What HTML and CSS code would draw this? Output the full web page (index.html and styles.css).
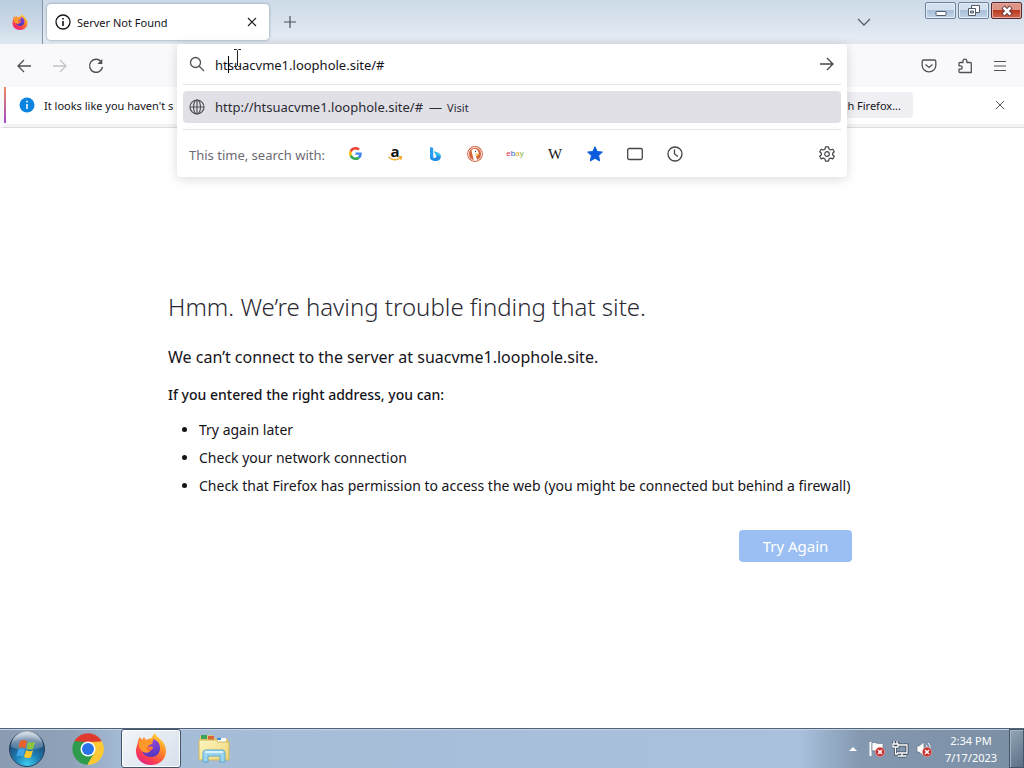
FILE: index.html
```html
<!DOCTYPE html>
<html lang="en">
<head>
<meta charset="utf-8">
<title>Server Not Found</title>
<link rel="stylesheet" href="styles.css">
</head>
<body>
<svg class="defs" aria-hidden="true">
  <defs>
    <linearGradient id="fxBody" x1="0.8" y1="0" x2="0.2" y2="1"><stop offset="0" stop-color="#ffe040"/><stop offset="0.4" stop-color="#ff8a28"/><stop offset="0.75" stop-color="#fb3c50"/><stop offset="1" stop-color="#e0208c"/></linearGradient>
    <linearGradient id="fxCore" x1="0" y1="0" x2="0.3" y2="1"><stop offset="0" stop-color="#a04be0"/><stop offset="1" stop-color="#5638c0"/></linearGradient>
    <radialGradient id="orb" cx="0.5" cy="0.95" r="0.9"><stop offset="0" stop-color="#3fd0f0"/><stop offset="0.4" stop-color="#1d7fb4"/><stop offset="0.8" stop-color="#1e4a78"/><stop offset="1" stop-color="#7d9bb8"/></radialGradient>
    <linearGradient id="shine" x1="0" y1="0" x2="0" y2="1"><stop offset="0" stop-color="#fff" stop-opacity="0.7"/><stop offset="1" stop-color="#fff" stop-opacity="0.15"/></linearGradient>
    <linearGradient id="folder" x1="0" y1="0" x2="1" y2="1"><stop offset="0" stop-color="#fdf6c0"/><stop offset="1" stop-color="#efd572"/></linearGradient>
    <symbol id="firefox" viewBox="0 0 32 32">
      <path d="M3 9c0-2 1-4 2-5l2 3 2-3 2 3c2-1 4-2 6-2 0-2 2-4 3-5 1 4 5 5 8 9 2 3 3 6 3 9 0 8-6 14-15 14S1 26 1 18c0-3 1-6 2-9z" fill="url(#fxBody)"/>
      <path d="M18 6c4 1 7 4 7 9 0 6-4 9-9 9-5 0-8-3-9-6 3 2 6 2 8 0 2-1 3-2 3-4-2-1-4 0-6-1 1-2 2-3 5-3 1-1 1-2 1-4z" fill="url(#fxCore)"/>
      <path d="M4 8c3-1 6-1 9 1l5 1c-2 2-5 2-6 4-1 3 1 4 3 4-2 2-5 2-8 0-3-3-4-6-3-10z" fill="#ff9a2a"/>
    </symbol>
    <symbol id="redx" viewBox="0 0 10 10">
      <circle cx="5" cy="5" r="4.7" fill="#c9302f" stroke="#f0b0a8" stroke-width="0.6"/>
      <path d="M3 3l4 4M7 3L3 7" stroke="#fff" stroke-width="1.5"/>
    </symbol>
  </defs>
</svg>

<header class="titlebar">
  <div class="view"><svg width="16" height="16"><use href="#firefox"/></svg></div>
  <div class="tab">
    <svg width="16" height="16" viewBox="0 0 16 16" fill="none" stroke="#15141a" stroke-width="1.3"><circle cx="8" cy="8" r="7"/><path d="M8 7v5M8 4v1.5" stroke-width="1.6"/></svg>
    <span class="tab-title">Server Not Found</span>
    <button class="icon-btn" aria-label="Close tab"><svg width="10" height="10" viewBox="0 0 10 10" stroke="#222" stroke-width="1.2"><path d="M1 1l8 8M9 1L1 9"/></svg></button>
  </div>
  <button class="icon-btn new-tab" aria-label="New tab"><svg width="12" height="12" viewBox="0 0 12 12" stroke="#4b5057" stroke-width="1.2"><path d="M6 0v12M0 6h12"/></svg></button>
  <button class="icon-btn list-tabs" aria-label="List all tabs"><svg width="14" height="8" viewBox="0 0 14 8" fill="none" stroke="#555c66" stroke-width="1.3"><path d="M1 1l6 6 6-6"/></svg></button>
  <div class="window-controls">
    <button class="win-btn" aria-label="Minimize"><svg width="12" height="12" viewBox="0 0 12 12"><rect x="1" y="6.500" width="10" height="4" rx="0.5" fill="#fff" stroke="#505a68"/></svg></button>
    <button class="win-btn" aria-label="Restore"><svg width="13" height="13" viewBox="0 0 13 13" fill="#fff" stroke="#505a68"><path d="M4.500 1.500h8v7h-8z"/><path d="M1.500 4.500h7v7h-7z"/><path d="M3.500 7h3v2h-3z" fill="#b9cde2"/></svg></button>
    <button class="win-btn close" aria-label="Close"><svg width="12" height="12" viewBox="0 0 12 12"><path d="M2 2l8 8M10 2l-8 8" stroke="#5b3038" stroke-width="4.500"/><path d="M2.500 2.500l7 7M9.500 2.500l-7 7" stroke="#fff" stroke-width="2.500"/></svg></button>
  </div>
</header>

<nav class="toolbar">
  <div class="nav-buttons">
    <button class="icon-btn" aria-label="Back"><svg width="16" height="16" viewBox="0 0 16 16" fill="none" stroke="#505056" stroke-width="1.3"><path d="M15 8H2M8 2L2 8l6 6"/></svg></button>
    <button class="icon-btn" aria-label="Forward" disabled><svg width="16" height="16" viewBox="0 0 16 16" fill="none" stroke="#c4c4c8" stroke-width="1.3"><path d="M1 8h13M8 2l6 6-6 6"/></svg></button>
    <button class="icon-btn" aria-label="Reload"><svg width="16" height="16" viewBox="0 0 16 16" fill="none" stroke="#505056" stroke-width="1.4"><path d="M13 3.500A6.500 6.500 0 1 0 14.500 9"/><path d="M14.300 1v5h-5z" fill="#505056" stroke="none"/></svg></button>
  </div>
  <div class="urlbar">
    <div class="urlbar-panel">
      <div class="url-row">
        <svg width="16" height="16" viewBox="0 0 16 16" fill="none" stroke="#505056" stroke-width="1.3"><circle cx="6.500" cy="6.500" r="5"/><path d="M10 10l5 5"/></svg>
        <input class="url-input" type="text" aria-label="Search or enter address" value="htsuacvme1.loophole.site/#">
        <button class="icon-btn" aria-label="Go"><svg width="16" height="16" viewBox="0 0 16 16" fill="none" stroke="#45454a" stroke-width="1.3"><path d="M1 8h13M8 2l6 6-6 6"/></svg></button>
        <span class="caret"></span>
        <svg class="pointer" width="9" height="18" viewBox="0 0 9 18" fill="none" stroke="#222"><path d="M1 0.500h2.500l1 1 1-1H8M4.500 1.500v15M1 17.500h2.500l1-1 1 1H8"/></svg>
      </div>
      <a class="result" href="#">
        <svg width="16" height="16" viewBox="0 0 16 16" fill="none" stroke="#505056" stroke-width="1.2"><circle cx="8" cy="8" r="7"/><ellipse cx="8" cy="8" rx="3.500" ry="7"/><path d="M8 1v14M1 8h14"/></svg>
        <span class="result-url">http://htsuacvme1.loophole.site/#</span>
        <span class="result-action"><span class="dash">—</span>Visit</span>
      </a>
      <div class="engines">
        <span class="engines-label">This time, search with:</span>
        <div class="engine-list">
          <button class="icon-btn" aria-label="Google"><svg width="13" height="13" viewBox="0 0 48 48"><path fill="#ea4335" d="M24 9.500c3.500 0 6.700 1.200 9.200 3.600l6.900-6.900C35.900 2.400 30.500 0 24 0 14.600 0 6.500 5.400 2.600 13.200l8 6.200C12.400 13.700 17.700 9.500 24 9.500z"/><path fill="#4285f4" d="M47 24.500c0-1.600-.2-3.100-.4-4.500H24v9h13c-.6 3-2.300 5.500-4.800 7.200l7.700 6C44.400 38 47 31.800 47 24.500z"/><path fill="#fbbc05" d="M10.500 28.600A14.500 14.500 0 0 1 10.500 19.400l-8-6.200a24 24 0 0 0 0 21.600z"/><path fill="#34a853" d="M24 48c6.500 0 11.900-2.100 15.900-5.800l-7.700-6c-2.200 1.500-4.900 2.300-8.200 2.300-6.300 0-11.600-4.200-13.500-9.900l-8 6.200C6.500 42.600 14.600 48 24 48z"/></svg></button>
          <button class="icon-btn amazon" aria-label="Amazon"><span>a</span><svg width="14" height="5" viewBox="0 0 14 5" fill="none" stroke="#f0a830" stroke-width="1.400"><path d="M0.500 1c4 3.500 8 3.500 12 1M10.500 0.800l3 0-.8 3"/></svg></button>
          <button class="icon-btn" aria-label="Bing"><svg width="14" height="16" viewBox="0 0 14 16"><path d="M2 1l2.600.8c.4.200.6.400.6.900V13L2 12z" fill="#2a9df0"/><path d="M6 5.500c4 .8 6.800 2.200 6.800 5.200 0 2.500-2 4.300-4.800 4.300-3.500 0-6-1.200-6-3.500l3.200-1v1.500c1.500.2 3-.5 3.500-1.500z" fill="#1f8fe8"/><path d="M6 5.500c4 .8 6.800 2.200 6.800 5.200L8.500 9z" fill="#35c5e8"/></svg></button>
          <button class="icon-btn" aria-label="DuckDuckGo"><svg width="16" height="16" viewBox="0 0 16 16"><circle cx="8" cy="8" r="7.900" fill="#d2603c"/><circle cx="8" cy="8" r="6.500" fill="none" stroke="#fff" stroke-width="0.9"/><path d="M4.500 4.500c2-2.500 7-1.500 7 2 .5 1 0 2-.5 3l-2 .5 1 4-3 .4L5.500 9z" fill="#fff"/><path d="M8.500 7.500l4 .5-1 1.200-3 .2z" fill="#f8b52c"/><circle cx="8.500" cy="5.500" r="0.7" fill="#345"/></svg></button>
          <button class="icon-btn ebay" aria-label="eBay"><span class="e">e</span><span class="b">b</span><span class="a">a</span><span class="y">y</span></button>
          <button class="icon-btn wiki" aria-label="Wikipedia">W</button>
          <button class="icon-btn" aria-label="Bookmarks"><svg width="16" height="16" viewBox="0 0 16 16"><path d="M8 .8l2.200 4.700 5.200.6-3.800 3.500 1 5.300L8 12.300l-4.600 2.600 1-5.300L.6 6.100l5.200-.6z" fill="#0b5cdc" stroke="#0b5cdc" stroke-linejoin="round"/></svg></button>
          <button class="icon-btn" aria-label="Tabs"><svg width="16" height="16" viewBox="0 0 16 16" fill="none" stroke="#45454a" stroke-width="1.3"><rect x="0.700" y="2.500" width="14.600" height="11" rx="1.500"/></svg></button>
          <button class="icon-btn" aria-label="History"><svg width="16" height="16" viewBox="0 0 16 16" fill="none" stroke="#45454a" stroke-width="1.3"><circle cx="8" cy="8" r="7"/><path d="M7.500 3.500V8l3.500 2.500"/></svg></button>
        </div>
        <button class="icon-btn" aria-label="Search settings"><svg width="16" height="16" viewBox="0 0 16 16" fill="none" stroke="#45454a" stroke-width="1.2" stroke-linejoin="round"><path d="M6.500.8h3l.5 2.300 1.500.9 2.300-.8 1.500 2.600L13.600 7.300v1.500l1.700 1.500-1.500 2.600-2.300-.8-1.500.9-.5 2.200h-3L6 13l-1.500-.9-2.300.8-1.500-2.600 1.700-1.500V7.300L.7 5.800l1.500-2.600 2.300.8L6 3.100z"/><circle cx="8" cy="8" r="2.300"/></svg></button>
      </div>
    </div>
  </div>
  <div class="tool-buttons">
    <button class="icon-btn" aria-label="Save to Pocket"><svg width="16" height="16" viewBox="0 0 16 16" fill="none" stroke="#505056" stroke-width="1.3"><path d="M2.500 2h11c.8 0 1.300.5 1.300 1.300V7.500a6.800 6.300 0 0 1-13.600 0V3.300C1.200 2.500 1.700 2 2.500 2z"/><path d="M4.500 6.500L8 9.500l3.500-3"/></svg></button>
    <button class="icon-btn" aria-label="Extensions"><svg width="16" height="16" viewBox="0 0 16 16" fill="none" stroke="#505056" stroke-width="1.3" stroke-linejoin="round"><path d="M6 4.500V3a1.900 1.900 0 0 1 3.800 0v1.500h3.500c.6 0 1 .4 1 1v9H3c-.6 0-1-.4-1-1v-2.300h1.500a1.700 1.700 0 0 0 0-3.400H2V5.500c0-.6.400-1 1-1z"/></svg></button>
    <button class="icon-btn" aria-label="Menu"><svg width="14" height="12" viewBox="0 0 14 12" stroke="#505056" stroke-width="1.2"><path d="M1 1.500h12M1 6h12M1 10.500h12"/></svg></button>
  </div>
</nav>

<section class="notice">
  <svg width="16" height="16" viewBox="0 0 16 16"><circle cx="8" cy="8" r="7.500" fill="#0a84e0"/><path d="M8 7v5M8 3.800v1.700" stroke="#fff" stroke-width="1.500"/></svg>
  <span class="notice-text">It looks like you haven't s</span>
  <button class="refresh">Refresh Firefox...</button>
  <button class="icon-btn" aria-label="Dismiss"><svg width="10" height="10" viewBox="0 0 10 10" stroke="#55555a" stroke-width="1"><path d="M1 1l8 8M9 1L1 9"/></svg></button>
</section>

<main class="page">
  <article class="error">
    <h1>Hmm. We’re having trouble finding that site.</h1>
    <p class="lead">We can’t connect to the server at suacvme1.loophole.site.</p>
    <p class="hint">If you entered the right address, you can:</p>
    <ul>
      <li>Try again later</li>
      <li>Check your network connection</li>
      <li>Check that Firefox has permission to access the web (you might be connected but behind a firewall)</li>
    </ul>
    <button class="retry">Try Again</button>
  </article>
</main>

<footer class="taskbar">
  <button class="task start" aria-label="Start"><svg width="38" height="38" viewBox="0 0 38 38"><circle cx="19" cy="19" r="17.500" fill="url(#orb)" stroke="#29405c"/><path d="M3 17a16 16 0 0 1 32 0c-9 4-23 4-32 0z" fill="url(#shine)"/><path d="M12 11c3-1.500 5-1 7 .3l-1.800 7c-2-1.300-4-1.500-6.800-.3z" fill="#e8602c"/><path d="M20.200 12c2 1 4.500 1 7-.2l-2 7c-2.500 1-4.500 1-6.700-.3z" fill="#8cc63e"/><path d="M10 19.500c3-1.200 5-.8 7 .3l-2 7c-2-1.200-4-1.300-6.600-.3z" fill="#3fa4e8"/><path d="M18 20.300c2 1 4.500 1.200 7 0l-2 7c-2.500 1-4.700.8-7-.3z" fill="#fdc82e"/></svg></button>
  <button class="task" aria-label="Chrome"><svg width="32" height="32" viewBox="0 0 32 32"><path d="M16 16L2.500 8A15.700 15.700 0 0 1 29.600 8z" fill="#e0392e"/><path d="M16 16L29.600 8A15.700 15.700 0 0 1 15.500 31.700z" fill="#fcc934"/><path d="M16 16l-.5 15.700A15.700 15.700 0 0 1 2.500 8z" fill="#2e9c4c"/><path d="M16 8.500h14L22.500 20z" fill="#fcc934"/><path d="M9.500 19.700L2.500 8 16 8.500z" fill="#2e9c4c"/><path d="M2.500 8h27L16 9z" fill="#e0392e"/><path d="M9.500 19.700l6 12 7-12z" fill="#2e9c4c"/><path d="M22.500 19.700l-7 12c8 0 14-6 14-12z" fill="#fcc934"/><circle cx="16" cy="16" r="7.500" fill="#fff"/><circle cx="16" cy="16" r="6" fill="#2a72e8"/></svg></button>
  <button class="task active" aria-label="Firefox"><svg width="32" height="32"><use href="#firefox"/></svg></button>
  <button class="task" aria-label="Windows Explorer"><svg width="34" height="32" viewBox="0 0 34 32"><path d="M3 3l13-1 1 3 14 1v20H3z" fill="#e5c96c"/><path d="M4 2h6v4H4z" fill="#3aa35a"/><path d="M11 3h6v4h-6z" fill="#d9663a"/><path d="M20 5h9v4h-9z" fill="#fff"/><path d="M20 5h4v2h-4z" fill="#3b8fd0"/><path d="M2 7h17l2 2h11v18H2z" fill="url(#folder)" stroke="#d2b65c"/><path d="M6 29V20c0-2 1-3 3-3h16c2 0 3 1 3 3v9h-5v-6H11v6z" fill="#9ad4ec" stroke="#5ca8cf"/><path d="M8 19h18" stroke="#d8f3fb" stroke-width="2"/></svg></button>
  <div class="tray">
    <svg width="8" height="5" viewBox="0 0 8 5"><path d="M0 5l4-4 4 4z" fill="#fff"/></svg>
    <svg width="16" height="18" viewBox="0 0 16 18"><path d="M1.500 2v14" stroke="#fff" stroke-width="2"/><path d="M3 3c3-2 5 2 11 0v8c-5 2-7-1-11 0z" fill="#fff" stroke="#59687a" stroke-width="0.600"/><use href="#redx" x="6" y="7" width="10" height="10"/></svg>
    <svg width="17" height="18" viewBox="0 0 17 18" fill="none"><path d="M6 5h9v8H5M10 13v3M6 16h8M2 1v3M5 1v3M1 4h5v3H1zM3.500 7v7H6" stroke="#3c4a5a" stroke-width="3"/><path d="M6 5h9v8H5M10 13v3M6 16h8M2 1v3M5 1v3M1 4h5v3H1zM3.500 7v7H6" stroke="#fff" stroke-width="1.300"/></svg>
    <svg width="17" height="18" viewBox="0 0 17 18"><path d="M1 6h2l5-4v14l-5-4H1z" fill="#fff" stroke="#59687a" stroke-width="0.600"/><path d="M10 5c1 1 1 2 1 3M12 3c2 2 2 3 2 5" stroke="#fff" fill="none"/><use href="#redx" x="6" y="7" width="10" height="10"/></svg>
  </div>
  <div class="clock"><span>2:34 PM</span><span>7/17/2023</span></div>
  <button class="show-desktop" aria-label="Show desktop"></button>
</footer>
</body>
</html>
```

FILE: styles.css
```css
* { box-sizing: border-box; }
body {
  margin: 0;
  min-height: 100vh;
  display: flex;
  flex-direction: column;
  font-family: "Noto Sans", "Open Sans", sans-serif;
  font-size: 11px;
  color: #15141a;
  background: #fff;
}
svg { display: block; flex: none; }
.defs { position: absolute; width: 0; height: 0; }
button { font: inherit; color: inherit; border: 0; padding: 0; }
.icon-btn {
  background: none;
  display: flex;
  align-items: center;
  justify-content: center;
  flex: none;
}

.titlebar {
  height: 44px;
  display: flex;
  align-items: center;
  background: linear-gradient(#cddbe8, #d9e3ee 50%, #e4ebf4 85%, #e0e6ec);
}
.view {
  width: 43px;
  align-self: stretch;
  display: flex;
  align-items: center;
  justify-content: center;
  padding-right: 3px;
  border-right: 1px solid #8797a9;
  background: linear-gradient(#b9cce0, #cddbe9 60%, #dfe8f0);
}
.tab {
  width: 222px;
  height: 36px;
  margin-left: 4px;
  padding: 0 12px 0 8px;
  display: flex;
  align-items: center;
  gap: 6px;
  background: #fff;
  border-radius: 4px;
  box-shadow: 0 0 3px #7f93a8;
}
.tab-title { flex: 1; }
.new-tab { margin-left: 15px; }
.list-tabs { margin-left: auto; }
.window-controls {
  display: flex;
  align-self: flex-start;
  gap: 2px;
  padding: 2px 2px 0 0;
  margin-left: 54px;
}
.win-btn {
  width: 31px;
  height: 17px;
  display: flex;
  align-items: center;
  justify-content: center;
  border: 1px solid #6d83a0;
  border-radius: 2px;
  background: linear-gradient(#d3e0ee 45%, #a9bfd8 50%, #c3d5e8);
  box-shadow: inset 0 0 0 1px #e4edf6;
}
.win-btn.close {
  border-color: #5c2630;
  background: linear-gradient(#dd9587 45%, #b93a22 50%, #d0694c);
  box-shadow: inset 0 0 0 1px #e5aa9e;
}

.toolbar {
  height: 43px;
  display: flex;
  align-items: center;
  background: #f9f9fb;
}
.nav-buttons { width: 177px; display: flex; gap: 20px; padding-left: 16px; }
.tool-buttons { width: 177px; display: flex; align-items: center; justify-content: flex-end; gap: 20px; padding-right: 17px; }
.urlbar { flex: 1; align-self: stretch; position: relative; }
.urlbar-panel {
  position: absolute;
  inset: 0 0 auto;
  z-index: 2;
  background: #fff;
  border-radius: 4px;
  box-shadow: 0 2px 12px #00000026;
  padding: 0 6px;
}
.url-row {
  position: relative;
  height: 41px;
  margin: 0 0 6px;
  padding: 0 6px;
  display: flex;
  align-items: center;
  gap: 10px;
  border-bottom: 1px solid #e3e3e7;
}
.url-input {
  flex: 1;
  min-width: 0;
  border: 0;
  padding: 2px 0 0;
  outline: 0;
  background: none;
  font: inherit;
  font-size: 13px;
  color: #15141a;
}
.caret { position: absolute; left: 45px; top: 12px; width: 1px; height: 17px; background: #000; }
.pointer { position: absolute; left: 50px; top: 5px; }
.result {
  height: 32px;
  padding: 0 6px;
  display: flex;
  align-items: center;
  gap: 10px;
  border-radius: 4px;
  background: #e0e0e6;
  color: #2b2a33;
  font-size: 13px;
  text-decoration: none;
}
.result-action { display: flex; align-items: center; gap: 5px; font-size: 11px; margin-left: -4px; }
.dash { font-size: 13px; }
.engines {
  height: 48px;
  margin-top: 6px;
  padding: 0 6px;
  display: flex;
  align-items: center;
  border-top: 1px solid #e3e3e7;
}
.engines-label { width: 146px; flex: none; padding-top: 2px; font-size: 13px; color: #6b6b72; white-space: nowrap; }
.engine-list { flex: 1; display: flex; }
.engine-list .icon-btn { width: 40px; height: 24px; }
.engine-list .amazon { flex-direction: column; font: bold 15px/10px "Open Sans", sans-serif; color: #111; }
.engine-list .ebay { font: 8px/16px "Liberation Sans", sans-serif; }
.e { color: #d8324a; }
.b { color: #2a5bd0; }
.a { color: #e0ae20; }
.y { color: #84b030; }
.engine-list .wiki { font: 15px/16px "Liberation Serif", serif; }

.notice {
  height: 41px;
  display: flex;
  align-items: center;
  padding: 0 19px 4px 15px;
  border-left: 4px solid #f9f9fb;
  border-bottom: 1px solid #dcdce0;
  background: linear-gradient(#ef8a62, #a04bc8) 0 0 / 2px 36px no-repeat, linear-gradient(#fff 37px, #f3f3f5 37px);
}
.notice-text { flex: 1; margin-left: 9px; white-space: nowrap; }
.refresh {
  width: 120px;
  height: 26px;
  margin-right: 82px;
  padding-right: 12px;
  text-align: right;
  border-radius: 4px;
  background: #f0f0f4;
}

.page {
  flex: 1;
  display: flex;
  align-items: center;
  justify-content: center;
  padding: 0 4px 6px 0;
}
.error { width: 684px; display: flex; flex-direction: column; }
.error h1 { margin: 0; font-size: 24px; line-height: 36px; font-weight: 300; color: #2b2a33; }
.lead { margin: 20px 0 0; font-size: 16px; line-height: 24px; }
.hint { margin: 14px 0 0; font-size: 14px; line-height: 24px; font-weight: 500; }
.error ul { margin: 9px 0 0; padding-left: 31px; font-size: 14px; line-height: 28px; white-space: nowrap; }
.retry {
  align-self: flex-end;
  width: 113px;
  height: 32px;
  margin-top: 30px;
  border-radius: 4px;
  background: #9bbff3;
  color: #fff;
  font-size: 15px;
}

.taskbar {
  height: 40px;
  display: flex;
  align-items: stretch;
  border-top: 1px solid #4f6277;
  background: linear-gradient(90deg, #8a9bb2, #8fa2ba 7%, #a5bcd6 12%, #a9c1dd 78%, #8499b0 84%, #7a8ea4);
  box-shadow: inset 0 1px 0 #c5d4e4;
}
.task {
  width: 60px;
  display: flex;
  align-items: center;
  justify-content: center;
  background: none;
  margin-right: 3px;
}
.task.start { width: 54px; margin-right: 4px; }
.task.active {
  border: 1px solid #43556b;
  border-radius: 3px;
  background: linear-gradient(135deg, #f2f5f9, #d7e0eb);
  box-shadow: inset 0 0 0 1px #fff;
}
.tray { margin-left: auto; display: flex; align-items: center; gap: 7px; }
.tray svg:first-child { margin-right: 5px; }
.clock {
  width: 76px;
  display: flex;
  flex-direction: column;
  align-items: center;
  justify-content: center;
  font-size: 11px;
  line-height: 17px;
  color: #fff;
}
.show-desktop {
  width: 15px;
  border: 1px solid #45566a;
  background: linear-gradient(135deg, #94a5b8, #5b6e84);
  box-shadow: inset 1px 1px 0 #a5b4c4;
}
```
